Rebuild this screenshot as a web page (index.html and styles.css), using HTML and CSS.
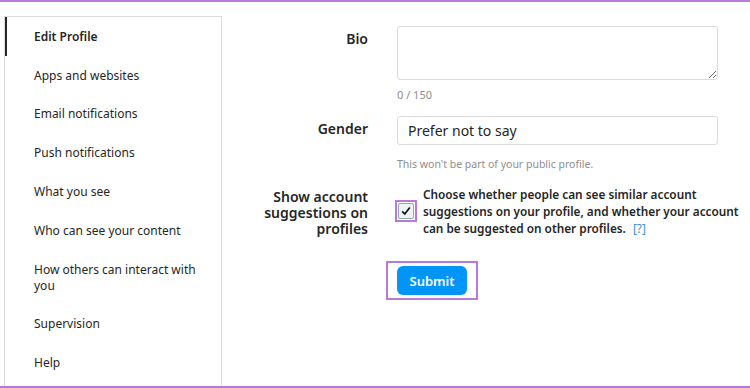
FILE: index.html
```html
<!DOCTYPE html>
<html lang="en">
<head>
    <meta charset="UTF-8">
    <meta name="viewport" content="width=device-width, initial-scale=1.0">
    <title>Edit Profile</title>
    <link rel="stylesheet" href="styles.css">
</head>
<body>
    <div class="frame">
        <nav class="sidebar">
            <a class="nav-item active" href="#">Edit Profile</a>
            <a class="nav-item" href="#">Apps and websites</a>
            <a class="nav-item" href="#">Email notifications</a>
            <a class="nav-item" href="#">Push notifications</a>
            <a class="nav-item" href="#">What you see</a>
            <a class="nav-item" href="#">Who can see your content</a>
            <a class="nav-item" href="#">How others can interact with you</a>
            <a class="nav-item" href="#">Supervision</a>
            <a class="nav-item" href="#">Help</a>
        </nav>

        <main class="content">
            <form class="profile-form">
                <label class="field-label bio-label" for="bio">Bio</label>
                <div class="field">
                    <textarea id="bio" class="bio-input"></textarea>
                    <div class="counter">0 / 150</div>
                </div>

                <label class="field-label gender-label" for="gender">Gender</label>
                <div class="field">
                    <input id="gender" class="text-input" type="text" value="Prefer not to say">
                    <div class="hint">This won't be part of your public profile.</div>
                </div>

                <label class="field-label suggest-label" for="suggest">Show account suggestions on profiles</label>
                <div class="field suggest-field">
                    <span class="check-wrap">
                        <span class="check-box">
                            <svg width="10" height="10" viewBox="0 0 10 10"><path d="M1.2 5.3 L3.8 8 L8.8 1.5" fill="none" stroke="#111" stroke-width="1.7"/></svg>
                        </span>
                    </span>
                    <p class="suggest-text">Choose whether people can see similar account suggestions on your profile, and whether your account can be suggested on other profiles.<a href="#" class="help-link">[?]</a></p>
                </div>

                <div></div>
                <div class="field">
                    <span class="submit-wrap">
                        <button type="button" class="submit-btn">Submit</button>
                    </span>
                </div>
            </form>
        </main>
    </div>
</body>
</html>
```

FILE: styles.css
```css
body {
    margin: 0;
    font-family: "Noto Sans", "Open Sans", sans-serif;
    color: #262626;
    background: #ffffff;
}
.frame {
    display: flex;
    height: 388px;
    box-sizing: border-box;
    border-top: 2px solid #b77ad9;
    border-bottom: 2px solid #b77ad9;
}
.sidebar {
    display: flex;
    flex-direction: column;
    width: 216px;
    margin: 14px 0 0 4px;
    border-left: 1px solid #dbdbdb;
    border-top: 1px solid #dbdbdb;
    border-right: 1px solid #dbdbdb;
}
.nav-item {
    display: block;
    padding: 11.8px 16px 11px 27px;
    font-size: 12px;
    line-height: 16px;
    color: #262626;
    text-decoration: none;
    border-left: 2px solid transparent;
}
.nav-item.active {
    border-left-color: #262626;
    font-weight: 600;
}
.content {
    flex: 1;
}
.profile-form {
    display: grid;
    grid-template-columns: 120px 321px;
    column-gap: 29px;
    margin: 24px 0 0 26px;
}
.field-label {
    text-align: right;
    font-size: 14px;
    font-weight: 600;
    line-height: 18px;
}
.bio-label {
    padding-top: 4px;
}
.gender-label {
    padding-top: 4px;
    margin-top: 13px;
}
.suggest-label {
    margin-top: 17px;
    line-height: 16px;
}
.field {
    display: flex;
    flex-direction: column;
}
.bio-input {
    height: 54px;
    box-sizing: border-box;
    border: 1px solid #dbdbdb;
    border-radius: 3px;
    resize: vertical;
    font-family: inherit;
}
.counter {
    margin-top: 7px;
    font-size: 11px;
    line-height: 16px;
    color: #8e8e8e;
}
.text-input {
    margin-top: 13px;
    height: 29px;
    box-sizing: border-box;
    border: 1px solid #dbdbdb;
    border-radius: 3px;
    padding: 0 10px;
    font-family: inherit;
    font-size: 14px;
    color: #262626;
}
.hint {
    margin-top: 11px;
    font-size: 10.5px;
    line-height: 16px;
    color: #8e8e8e;
}
.suggest-field {
    flex-direction: row;
    align-items: flex-start;
    margin-top: 14px;
}
.check-wrap {
    margin: 14px 0 0 -2px;
    padding: 1px;
    border: 2px solid #b77ad9;
    display: flex;
}
.check-box {
    width: 14px;
    height: 14px;
    border: 1px solid #8fa9b4;
    border-radius: 2px;
    background: #eef4f6;
    display: flex;
    align-items: center;
    justify-content: center;
}
.suggest-text {
    flex: none;
    width: 318px;
    margin: 0 0 0 6px;
    font-size: 11.8px;
    font-weight: 600;
    line-height: 17px;
}
.help-link {
    margin-left: 7px;
    color: #3a8fd6;
    font-weight: 400;
    text-decoration: none;
}
.submit-wrap {
    align-self: flex-start;
    margin: 24px 0 0 -11px;
    padding: 3px 9px;
    border: 2px solid #b77ad9;
}
.submit-btn {
    display: block;
    width: 70px;
    height: 29px;
    border: none;
    border-radius: 6px;
    background: #0095f6;
    color: #ffffff;
    font-family: inherit;
    font-size: 13px;
    font-weight: 600;
}
```
